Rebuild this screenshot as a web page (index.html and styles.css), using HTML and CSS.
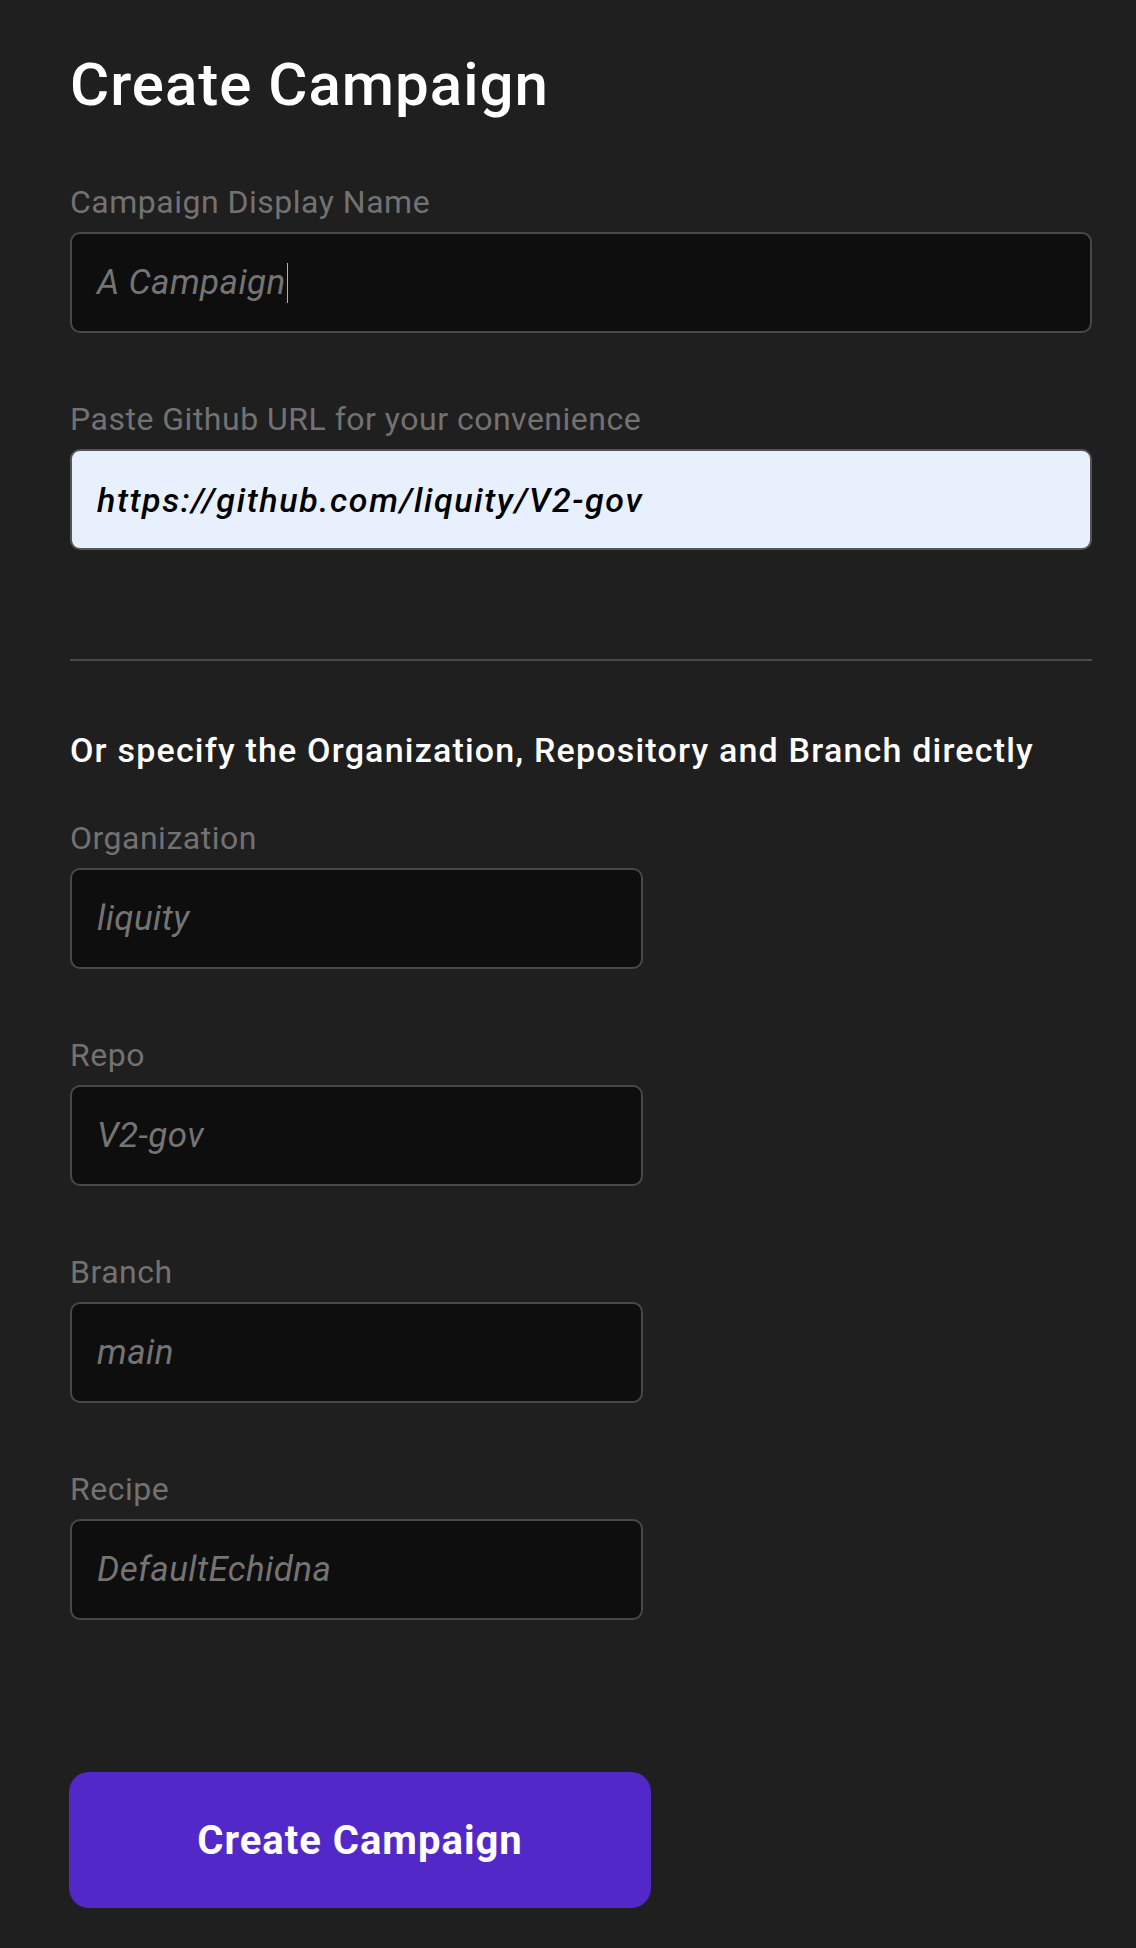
FILE: index.html
```html
<!DOCTYPE html>
<html lang="en">
<head>
<meta charset="utf-8">
<title>Create Campaign</title>
<link rel="stylesheet" href="styles.css">
</head>
<body>
<main class="page">
  <h1 class="title">Create Campaign</h1>

  <div class="field field-wide">
    <label class="label">Campaign Display Name</label>
    <div class="input"><span class="placeholder">A Campaign</span><span class="caret"></span></div>
  </div>

  <div class="field field-wide">
    <label class="label">Paste Github URL for your convenience</label>
    <div class="input input-filled"><span class="value">https://github.com/liquity/V2-gov</span></div>
  </div>

  <hr class="divider">

  <p class="subhead">Or specify the Organization, Repository and Branch directly</p>

  <div class="field field-narrow">
    <label class="label">Organization</label>
    <div class="input"><span class="placeholder">liquity</span></div>
  </div>

  <div class="field field-narrow">
    <label class="label">Repo</label>
    <div class="input"><span class="placeholder">V2-gov</span></div>
  </div>

  <div class="field field-narrow">
    <label class="label">Branch</label>
    <div class="input"><span class="placeholder">main</span></div>
  </div>

  <div class="field field-narrow">
    <label class="label">Recipe</label>
    <div class="input"><span class="placeholder">DefaultEchidna</span></div>
  </div>

  <button class="submit" type="button">Create Campaign</button>
</main>
</body>
</html>
```

FILE: styles.css
```css
html, body {
  margin: 0;
  padding: 0;
  background: #1f1f1f;
}

body {
  font-family: Roboto, "Noto Sans", "Liberation Sans", sans-serif;
  color: #ffffff;
  min-height: 1948px;
}

.page {
  width: 1022px;
  padding: 55px 0 40px 70px;
  display: flex;
  flex-direction: column;
}

.title {
  margin: 0 0 67px 0;
  font-size: 60px;
  line-height: 60px;
  font-weight: 500;
  letter-spacing: 1px;
  color: #ffffff;
}

.field {
  display: flex;
  flex-direction: column;
  gap: 10px;
  margin-bottom: 66px;
}

.field-wide {
  width: 1022px;
}

.field-narrow {
  width: 573px;
}

.label {
  font-size: 32px;
  line-height: 40px;
  color: #727272;
  letter-spacing: 0.5px;
}

.input {
  box-sizing: border-box;
  height: 101px;
  border: 2px solid #484848;
  border-radius: 10px;
  background: #0e0e0e;
  display: flex;
  align-items: center;
  padding-left: 25px;
  font-size: 35px;
  font-style: italic;
  letter-spacing: 0.4px;
}

.placeholder {
  color: #747474;
}

.caret {
  display: inline-block;
  width: 1.5px;
  height: 40px;
  background: #b0b0b0;
  margin-left: 1px;
}

.input-filled {
  background: #e8f0fe;
  border-color: #555555;
}

.value {
  color: #000000;
  font-weight: 500;
  font-size: 34px;
  letter-spacing: 1.6px;
}

.divider {
  margin: 43px 0 0 0;
  width: 1022px;
  height: 2px;
  border: 0;
  background: #4a4a4a;
}

.subhead {
  margin: 69px 0 48px 0;
  font-size: 34px;
  line-height: 40px;
  font-weight: 500;
  letter-spacing: 1.2px;
  color: #ffffff;
}

.submit {
  margin-top: 86px;
  width: 582px;
  height: 136px;
  margin-left: -1px;
  border: 0;
  border-radius: 20px;
  background: #5328c8;
  color: #ffffff;
  font-family: Roboto, "Noto Sans", "Liberation Sans", sans-serif;
  font-size: 40px;
  font-weight: 700;
  letter-spacing: 1px;
  cursor: pointer;
}
```
